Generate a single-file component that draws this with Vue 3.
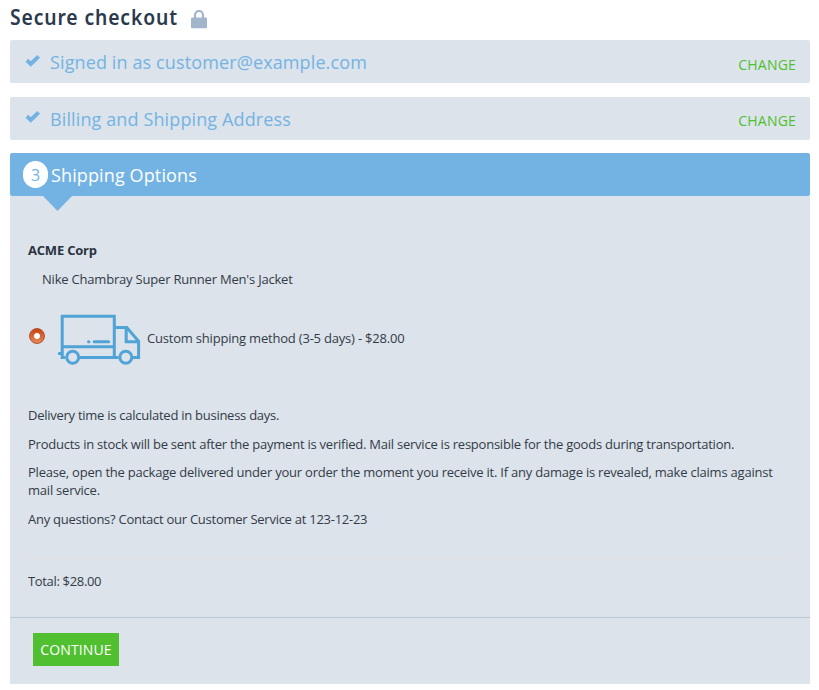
<script setup>
const doneSteps = [
  { title: 'Signed in as customer@example.com' },
  { title: 'Billing and Shipping Address' },
]
const notes = [
  'Delivery time is calculated in business days.',
  'Products in stock will be sent after the payment is verified. Mail service is responsible for the goods during transportation.',
  'Please, open the package delivered under your order the moment you receive it. If any damage is revealed, make claims against mail service.',
  'Any questions? Contact our Customer Service at 123-12-23',
]
</script>

<template>
  <main class="checkout">
    <h1 class="title">
      <span class="title-text">Secure checkout</span>
      <svg class="lock" width="16" height="19" viewBox="0 0 16 19">
        <path d="M4 9V5a4 4 0 0 1 8 0V9" fill="none" stroke="#a3b5cb" stroke-width="2.2" />
        <rect x="0" y="7.6" width="16" height="10.6" rx="1" fill="#a3b5cb" />
      </svg>
    </h1>

    <section v-for="step in doneSteps" :key="step.title" class="step done">
      <svg class="check" width="15" height="13" viewBox="0 0 15 13">
        <path d="M1.8 6.3 5.8 10 13.6 2.3" fill="none" stroke="#73b3e4" stroke-width="4" />
      </svg>
      <h2 class="step-title">{{ step.title }}</h2>
      <a class="change">CHANGE</a>
    </section>

    <section class="step active">
      <span class="number">3</span>
      <h2 class="step-title">Shipping Options</h2>
    </section>

    <div class="panel">
      <div class="pointer"></div>
      <div class="content">
        <p class="vendor">ACME Corp</p>
        <p class="product">Nike Chambray Super Runner Men's Jacket</p>
        <label class="method">
          <span class="radio"></span>
          <svg class="truck" width="86" height="54" viewBox="56 312 86 54" fill="none" stroke="#50a3d6" stroke-width="3">
            <path d="M65 357.4H62.2V316.2H114.3V357.4M80 357.4H118.5M62 346.8H114M114 327.6H126.8L138.6 341.2V357.4H133" />
            <path d="M126.2 327.6V341.7H138.6" />
            <path d="M59.2 353.4H62M88.5 341.7H88.9M94.2 341.7H108.7" stroke-linecap="round" />
            <circle cx="72.7" cy="357.3" r="6" />
            <circle cx="125.8" cy="357.3" r="6" />
          </svg>
          <span class="method-name">Custom shipping method (3-5 days) - $28.00</span>
        </label>
        <div class="notes">
          <p v-for="note in notes" :key="note">{{ note }}</p>
        </div>
        <hr class="rule" />
        <p class="total">Total: $28.00</p>
      </div>
      <footer class="footer">
        <button class="continue" type="button">CONTINUE</button>
      </footer>
    </div>
  </main>
</template>

<style>
body {
  margin: 0;
  background: #fff;
}
</style>

<style scoped>
.checkout {
  box-sizing: border-box;
  width: 819px;
  height: 690px;
  padding: 0 9px 0 10px;
  overflow: hidden;
  font-family: 'Open Sans', sans-serif;
  font-size: 13px;
  line-height: 18px;
  color: #333b48;
}
h1, h2, p {
  margin: 0;
  font-weight: 400;
}
.title {
  display: flex;
  gap: 13px;
  height: 40px;
}
.title-text {
  width: 168px;
  font: 600 21px/35px 'Noto Sans', sans-serif;
  letter-spacing: 0.95px;
  white-space: nowrap;
  color: #2b3a4c;
  transform: scaleX(0.92);
  transform-origin: left;
}
.lock {
  margin-top: 9.5px;
}
.step {
  display: flex;
  box-sizing: border-box;
  height: 43px;
  border-radius: 2px;
}
.done {
  margin-bottom: 14px;
  padding: 0 14px 0 15px;
  background: #dce3ea;
  color: #73b3e4;
}
.done + .done {
  margin-bottom: 13px;
}
.check {
  margin: 14px 10px 0 0;
}
.done + .done .check {
  margin-top: 13px;
}
.step-title {
  font-size: 18px;
  line-height: 44px;
  letter-spacing: 0.12px;
  white-space: nowrap;
}
.change {
  margin-left: auto;
  font-size: 14px;
  line-height: 50px;
  letter-spacing: 0.2px;
  color: #50c030;
}
.done + .done .change {
  line-height: 48px;
}
.active {
  gap: 3px;
  padding-left: 13px;
  background: #73b3e4;
  color: #fff;
}
.number {
  width: 25px;
  height: 27px;
  margin-top: 8px;
  border-radius: 13px;
  background: #fff;
  font-size: 16px;
  line-height: 28px;
  text-align: center;
  color: #73b3e4;
}
.panel {
  height: 488px;
  background: #dce3ea;
}
.pointer {
  width: 29px;
  height: 15px;
  margin-left: 33px;
  background: #73b3e4;
  clip-path: polygon(0 0, 100% 0, 50% 100%);
}
.content {
  box-sizing: border-box;
  height: 406px;
  padding: 30px 17px 0 18px;
  letter-spacing: -0.2px;
}
.vendor {
  font-weight: 700;
  color: #2b3442;
}
.product {
  margin: 11px 0 0 14px;
}
.method {
  display: flex;
  margin-top: 24px;
  height: 54px;
}
.radio {
  box-sizing: border-box;
  width: 16px;
  height: 16px;
  margin: 16px 11px 0 1px;
  border: 1px solid #b5532c;
  border-radius: 50%;
  background: radial-gradient(circle, #fff 0 2.6px, transparent 3.4px), linear-gradient(#c94310, #e78659);
}
.method-name {
  margin: 17px 0 0 5px;
}
.notes {
  margin-top: 40px;
  letter-spacing: -0.235px;
}
.notes p {
  margin-bottom: 11px;
}
.notes p:nth-child(2) {
  margin-bottom: 10px;
}
.notes p:nth-child(3) {
  letter-spacing: -0.22px;
}
.notes p:first-child,
.notes p:last-child {
  letter-spacing: -0.26px;
}
.rule {
  height: 1px;
  margin: 30px 0 13px;
  border: 0;
  background: #e3e1e1;
}
.total {
  letter-spacing: -0.33px;
}
.footer {
  box-sizing: border-box;
  padding: 15px 23px;
  border-top: 1px solid #b9c7d6;
}
.continue {
  display: block;
  width: 86px;
  height: 33px;
  padding: 0;
  border: 0;
  background: #50c030;
  font: 14px/33px 'Open Sans', sans-serif;
  letter-spacing: 0.15px;
  color: #fff;
}
</style>
